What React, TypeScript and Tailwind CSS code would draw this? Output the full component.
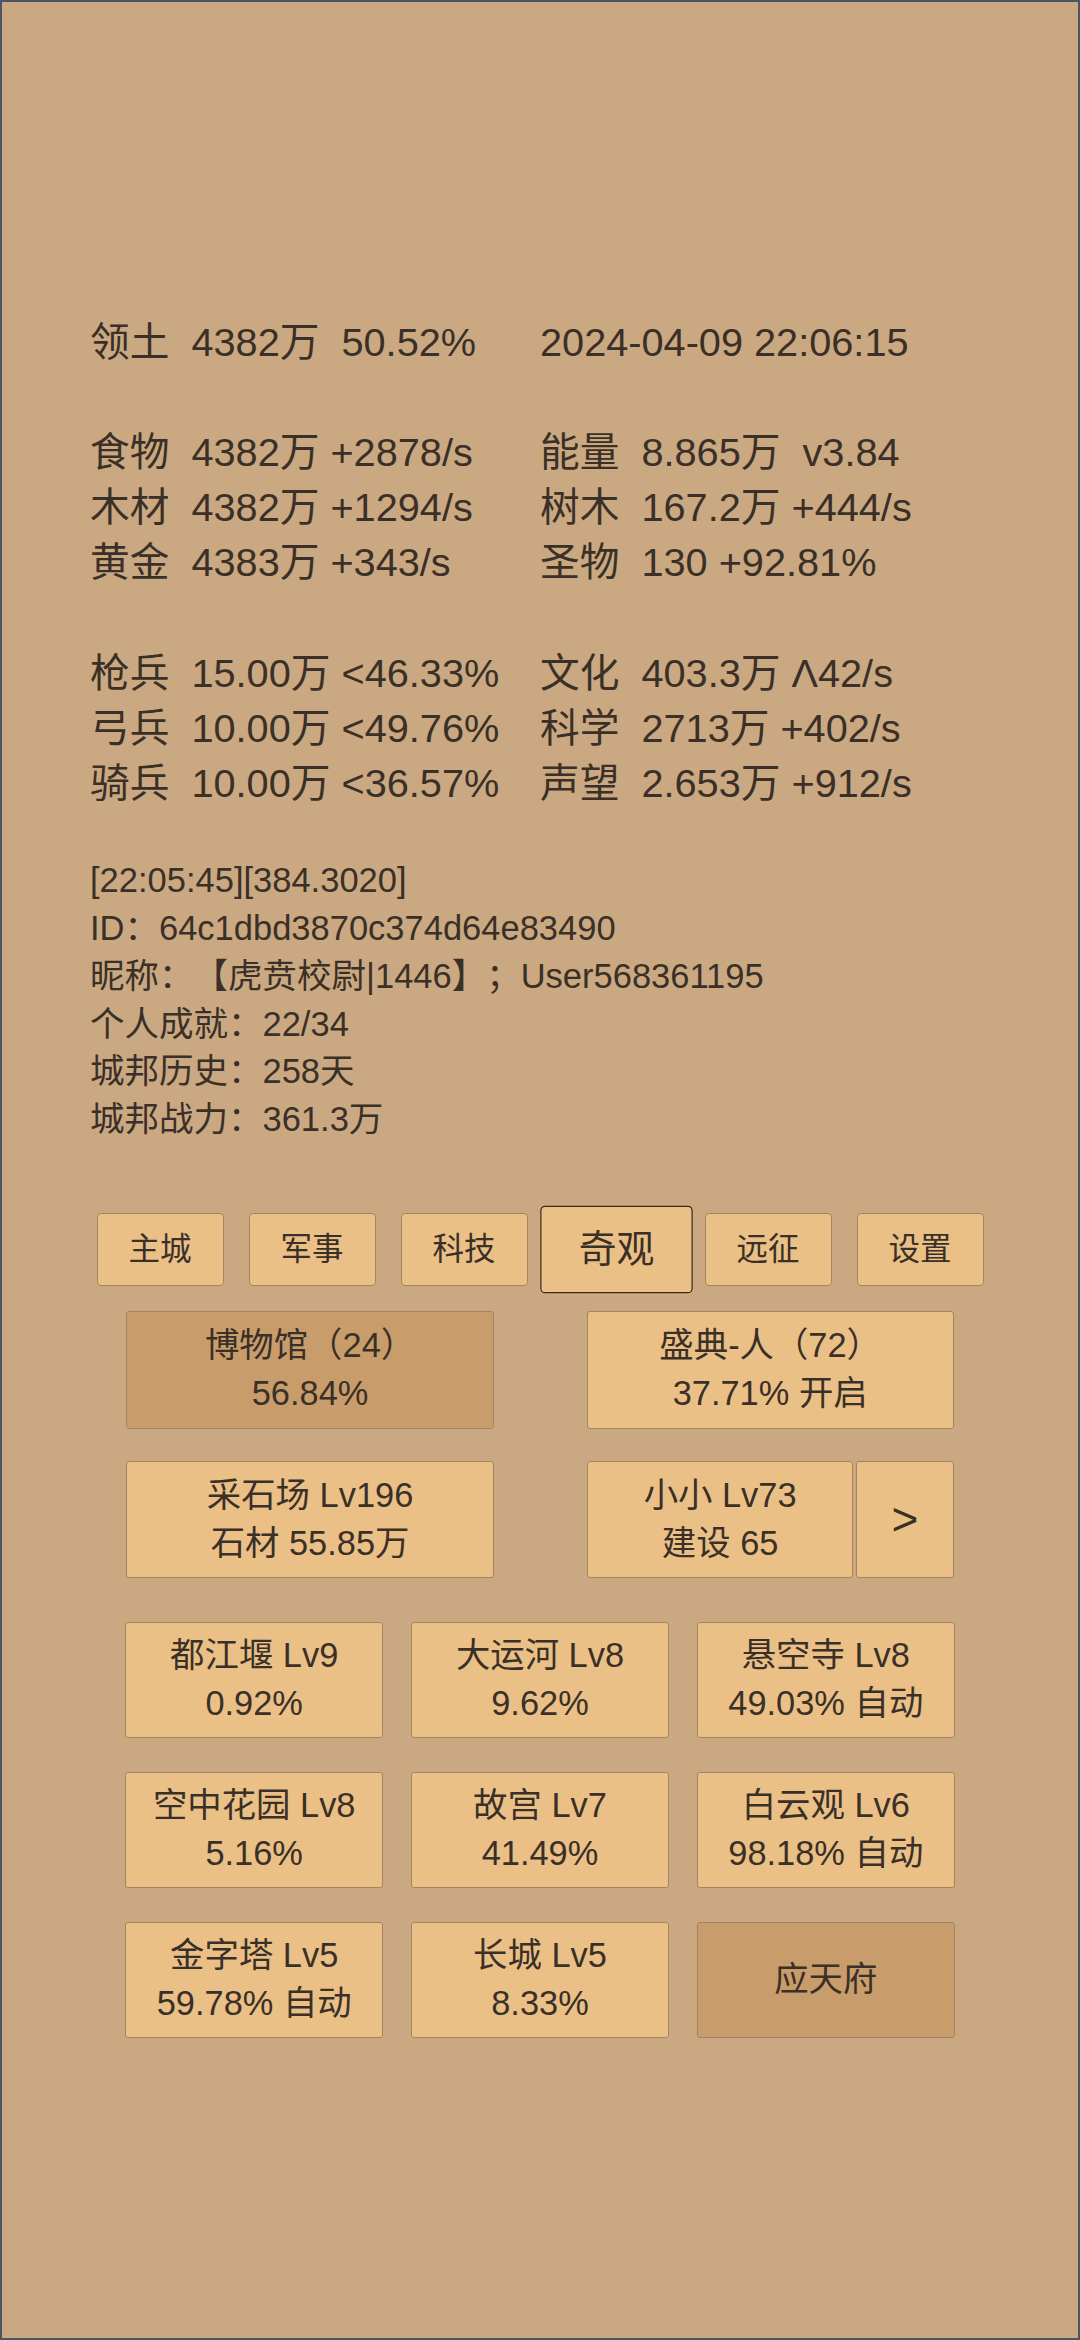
import React from "react";

const statRows: [string, string][] = [
  ["领土  4382万  50.52%", "2024-04-09 22:06:15"],
  ["", ""],
  ["食物  4382万 +2878/s", "能量  8.865万  v3.84"],
  ["木材  4382万 +1294/s", "树木  167.2万 +444/s"],
  ["黄金  4383万 +343/s", "圣物  130 +92.81%"],
  ["", ""],
  ["枪兵  15.00万 <46.33%", "文化  403.3万 Λ42/s"],
  ["弓兵  10.00万 <49.76%", "科学  2713万 +402/s"],
  ["骑兵  10.00万 <36.57%", "声望  2.653万 +912/s"],
];

const infoLines = [
  "[22:05:45][384.3020]",
  "ID：64c1dbd3870c374d64e83490",
  "昵称：【虎贲校尉|1446】；User568361195",
  "个人成就：22/34",
  "城邦历史：258天",
  "城邦战力：361.3万",
];

const tabs = ["主城", "军事", "科技", "奇观", "远征", "设置"];

const wonders: { l1: string; l2?: string; dark?: boolean }[] = [
  { l1: "都江堰 Lv9", l2: "0.92%" },
  { l1: "大运河 Lv8", l2: "9.62%" },
  { l1: "悬空寺 Lv8", l2: "49.03% 自动" },
  { l1: "空中花园 Lv8", l2: "5.16%" },
  { l1: "故宫 Lv7", l2: "41.49%" },
  { l1: "白云观 Lv6", l2: "98.18% 自动" },
  { l1: "金字塔 Lv5", l2: "59.78% 自动" },
  { l1: "长城 Lv5", l2: "8.33%" },
  { l1: "应天府", dark: true },
];

function Card({
  l1,
  l2,
  dark,
  className,
}: {
  l1: string;
  l2?: string;
  dark?: boolean;
  className: string;
}) {
  return (
    <div
      className={
        "flex flex-col items-center justify-center rounded-[3px] border border-[#a4845f] text-[34.4px] leading-[47.7px] whitespace-pre " +
        (dark ? "bg-[#c99d6b] " : "bg-[#ebc087] ") +
        className
      }
    >
      <div>{l1}</div>
      {l2 ? <div>{l2}</div> : null}
    </div>
  );
}

export default function App() {
  return (
    <div
      className="box-border w-[1080px] h-[2340px] border-2 border-[#4e5468] bg-[#caa982] text-[#3a3027] overflow-hidden [text-spacing-trim:space-all]"
      style={{ fontFamily: '"Liberation Sans", "Noto Sans CJK SC", sans-serif' }}
    >
      {/* stats */}
      <div className="pt-[313px] pl-[88px]">
        <div className="grid grid-cols-[450px_450px] text-[39.7px] leading-[55.1px] whitespace-pre">
          {statRows.map(([a, b], i) => (
            <React.Fragment key={i}>
              <div className="h-[55.1px]">{a}</div>
              <div className="h-[55.1px]">{b}</div>
            </React.Fragment>
          ))}
        </div>
        {/* info */}
        <div className="mt-[46.6px] text-[34.5px] leading-[47.7px] whitespace-pre">
          {infoLines.map((t, i) => (
            <div key={i} className="h-[47.7px]">
              {t}
            </div>
          ))}
        </div>
      </div>

      {/* tabs */}
      <div className="mt-[69.6px] flex justify-center gap-[25px] h-[73px] items-center">
        {tabs.map((t) => {
          const active = t === "奇观";
          return (
            <div
              key={t}
              className={
                "w-[127px] h-[73px] flex items-center justify-center rounded-[4px] border bg-[#ebc087] text-[31.5px] " +
                (active
                  ? "border-[#3a2a1c] scale-[1.2]"
                  : "border-[#a4845f]")
              }
            >
              {t}
            </div>
          );
        })}
      </div>

      {/* main cards */}
      <div className="mt-[24.8px] flex flex-col items-center gap-[32.3px]">
        <div className="flex w-[827.4px] justify-between">
          <Card l1="博物馆（24）" l2="56.84%" dark className="w-[367.5px] h-[117.7px]" />
          <Card l1="盛典-人（72）" l2="37.71% 开启" className="w-[367px] h-[117.7px]" />
        </div>
        <div className="flex w-[827.4px] justify-between">
          <Card l1="采石场 Lv196" l2="石材 55.85万" className="w-[367.5px] h-[117.3px]" />
          <div className="flex gap-[3px]">
            <Card l1="小小 Lv73" l2="建设 65" className="w-[266.4px] h-[117.3px]" />
            <div className="w-[97.4px] h-[117.3px] flex items-center justify-center rounded-[3px] border border-[#a4845f] bg-[#ebc087] text-[46px]">
              &gt;
            </div>
          </div>
        </div>
      </div>

      {/* wonders grid */}
      <div className="mt-[43.4px] flex justify-center">
        <div className="grid grid-cols-[257.8px_257.8px_257.8px] gap-x-[28px] gap-y-[33.3px]">
          {wonders.map((w, i) => (
            <Card key={i} l1={w.l1} l2={w.l2} dark={w.dark} className="h-[116.7px]" />
          ))}
        </div>
      </div>
    </div>
  );
}
